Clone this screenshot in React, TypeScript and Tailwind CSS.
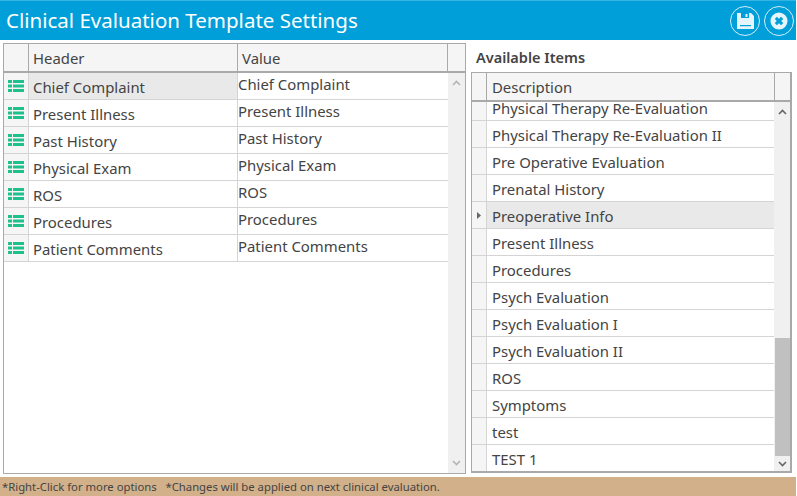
const leftRows = [
  "Chief Complaint",
  "Present Illness",
  "Past History",
  "Physical Exam",
  "ROS",
  "Procedures",
  "Patient Comments",
];

const rightRows = [
  "Physical Therapy Re-Evaluation",
  "Physical Therapy Re-Evaluation II",
  "Pre Operative Evaluation",
  "Prenatal History",
  "Preoperative Info",
  "Present Illness",
  "Procedures",
  "Psych Evaluation",
  "Psych Evaluation I",
  "Psych Evaluation II",
  "ROS",
  "Symptoms",
  "test",
  "TEST 1",
];

function ListIcon() {
  return (
    <svg width="16" height="14" viewBox="0 0 16 14" fill="#1fc08c">
      <rect x="0" y="1" width="4" height="3" />
      <rect x="5" y="1" width="11" height="3" />
      <rect x="0" y="5.5" width="4" height="3" />
      <rect x="5" y="5.5" width="11" height="3" />
      <rect x="0" y="10" width="4" height="3" />
      <rect x="5" y="10" width="11" height="3" />
    </svg>
  );
}

function Chevron({ up, color }: { up?: boolean; color: string }) {
  return (
    <svg width="9" height="6" viewBox="0 0 9 6" fill="none" stroke={color} strokeWidth="1.6">
      <path d={up ? "M1 5l3.5-3.5L8 5" : "M1 1l3.5 3.5L8 1"} />
    </svg>
  );
}

export default function App() {
  return (
    <div
      className="w-[797px] h-[496px] bg-white flex flex-col overflow-hidden text-[#444444]"
      style={{ fontFamily: '"Noto Sans", "Open Sans", sans-serif' }}
    >
      {/* Title bar */}
      <div className="h-[40px] mr-px bg-[#009fd9] border-t border-[#35b4e2] flex items-center justify-between pl-[6px] pr-[2px] shrink-0">
        <span className="text-[20.5px] leading-none text-white">Clinical Evaluation Template Settings</span>
        <div className="flex gap-[4px]">
          <div className="w-[30px] h-[30px] rounded-full border border-[#d5eff9] flex items-center justify-center">
            <svg width="17" height="16" viewBox="0 0 17 16">
              <path d="M0 0h14l3 3v13H0z" fill="#e4f5fb" />
              <rect x="4" y="0" width="8" height="5" fill="#009fd9" />
              <rect x="8.5" y="1" width="2" height="3" fill="#e4f5fb" />
              <rect x="3" y="12" width="11" height="1.2" fill="#009fd9" />
            </svg>
          </div>
          <div className="w-[30px] h-[30px] rounded-full border border-[#d5eff9] flex items-center justify-center">
            <svg width="18" height="18" viewBox="0 0 20 20">
              <circle cx="10" cy="10" r="9.5" fill="#e4f5fb" />
              <path d="M6.5 6.5l7 7M13.5 6.5l-7 7" stroke="#009fd9" strokeWidth="3.4" />
            </svg>
          </div>
        </div>
      </div>

      <div className="flex-1 flex min-h-0 pl-[3px] pr-[5px] pt-[3px] pb-[3px]">
        {/* Left table */}
        <div className="w-[463px] h-[431px] border border-[#a9a9a9] flex flex-col shrink-0">
          <div className="h-[29px] flex border-b-2 border-[#a9a9a9] bg-[#f5f5f5] shrink-0 text-[14.9px]">
            <div className="w-[25px] border-r border-[#a9a9a9]" />
            <div className="w-[209px] border-r border-[#a9a9a9] pl-[4px] leading-[29px]">Header</div>
            <div className="w-[210px] border-r border-[#a9a9a9] pl-[4px] leading-[29px]">Value</div>
            <div className="flex-1" />
          </div>
          <div className="flex-1 flex min-h-0">
            <div className="flex-1">
              {leftRows.map((row, i) => (
                <div key={row} className="h-[27px] flex border-b border-[#d4d4d4] text-[14.9px]">
                  <div className="w-[25px] flex items-center justify-center bg-[#f5f5f5] border-r border-[#d4d4d4]">
                    <ListIcon />
                  </div>
                  <div
                    className={
                      i === 0
                        ? "w-[209px] pl-[4px] pt-[1px] leading-[26px] bg-[#e9e9e9] border-r border-[#d4d4d4]"
                        : "w-[209px] pl-[4px] pt-[1px] leading-[26px] border-r border-[#d4d4d4]"
                    }
                  >
                    {row}
                  </div>
                  <div className="flex-1 leading-[23px]">{row}</div>
                </div>
              ))}
            </div>
            <div className="w-[17px] bg-[#f0f0f0] flex flex-col items-center justify-between py-[7px]">
              <Chevron up color="#b4b4b4" />
              <Chevron color="#b4b4b4" />
            </div>
          </div>
        </div>

        {/* Available items */}
        <div className="ml-[5px] flex-1 flex flex-col min-w-0">
          <div className="h-[29px] font-semibold text-[14.5px] leading-[29px] pl-[5px] shrink-0">Available Items</div>
          <div className="h-[401px] border-2 border-t border-l border-[#a9a9a9] flex flex-col">
            <div className="h-[29px] flex border-b-2 border-[#a9a9a9] bg-[#f5f5f5] shrink-0 text-[14.9px]">
              <div className="w-[15px] border-r border-[#a9a9a9]" />
              <div className="w-[288px] border-r border-[#a9a9a9] pl-[5px] pt-[1px] leading-[27px]">Description</div>
              <div className="flex-1" />
            </div>
            <div className="flex-1 flex min-h-0">
              <div className="flex-1 overflow-hidden">
                <div className="-mt-[8px]">
                  {rightRows.map((row, i) => (
                    <div key={row} className="h-[27px] flex border-b border-[#d4d4d4] text-[14.9px]">
                      <div className="w-[15px] bg-[#f5f5f5] border-r border-[#d4d4d4] flex items-center justify-center">
                        {i === 4 && (
                          <svg width="4" height="7" viewBox="0 0 4 7" fill="#666666">
                            <path d="M0 0l4 3.5L0 7z" />
                          </svg>
                        )}
                      </div>
                      <div
                        className={
                          i === 4
                            ? "flex-1 pl-[5px] pt-[1px] leading-[26px] bg-[#e9e9e9]"
                            : "flex-1 pl-[5px] pt-[1px] leading-[26px]"
                        }
                      >
                        {row}
                      </div>
                    </div>
                  ))}
                </div>
              </div>
              <div className="w-[16px] bg-[#f0f0f0] flex flex-col items-center">
                <div className="h-[236px] w-full shrink-0 pt-[7px] flex justify-center">
                  <Chevron up color="#666666" />
                </div>
                <div className="h-[118px] w-[15px] bg-[#c0c0c0] shrink-0" />
                <div className="flex-1 flex items-center justify-center">
                  <Chevron color="#666666" />
                </div>
              </div>
            </div>
          </div>
        </div>
      </div>

      {/* Footer */}
      <div className="h-[19px] mr-px bg-[#d1b08a] shrink-0 text-[11.3px] leading-[19px] pl-[2px] whitespace-pre text-[#444444]">
        *Right-Click for more options   *Changes will be applied on next clinical evaluation.
      </div>
    </div>
  );
}
